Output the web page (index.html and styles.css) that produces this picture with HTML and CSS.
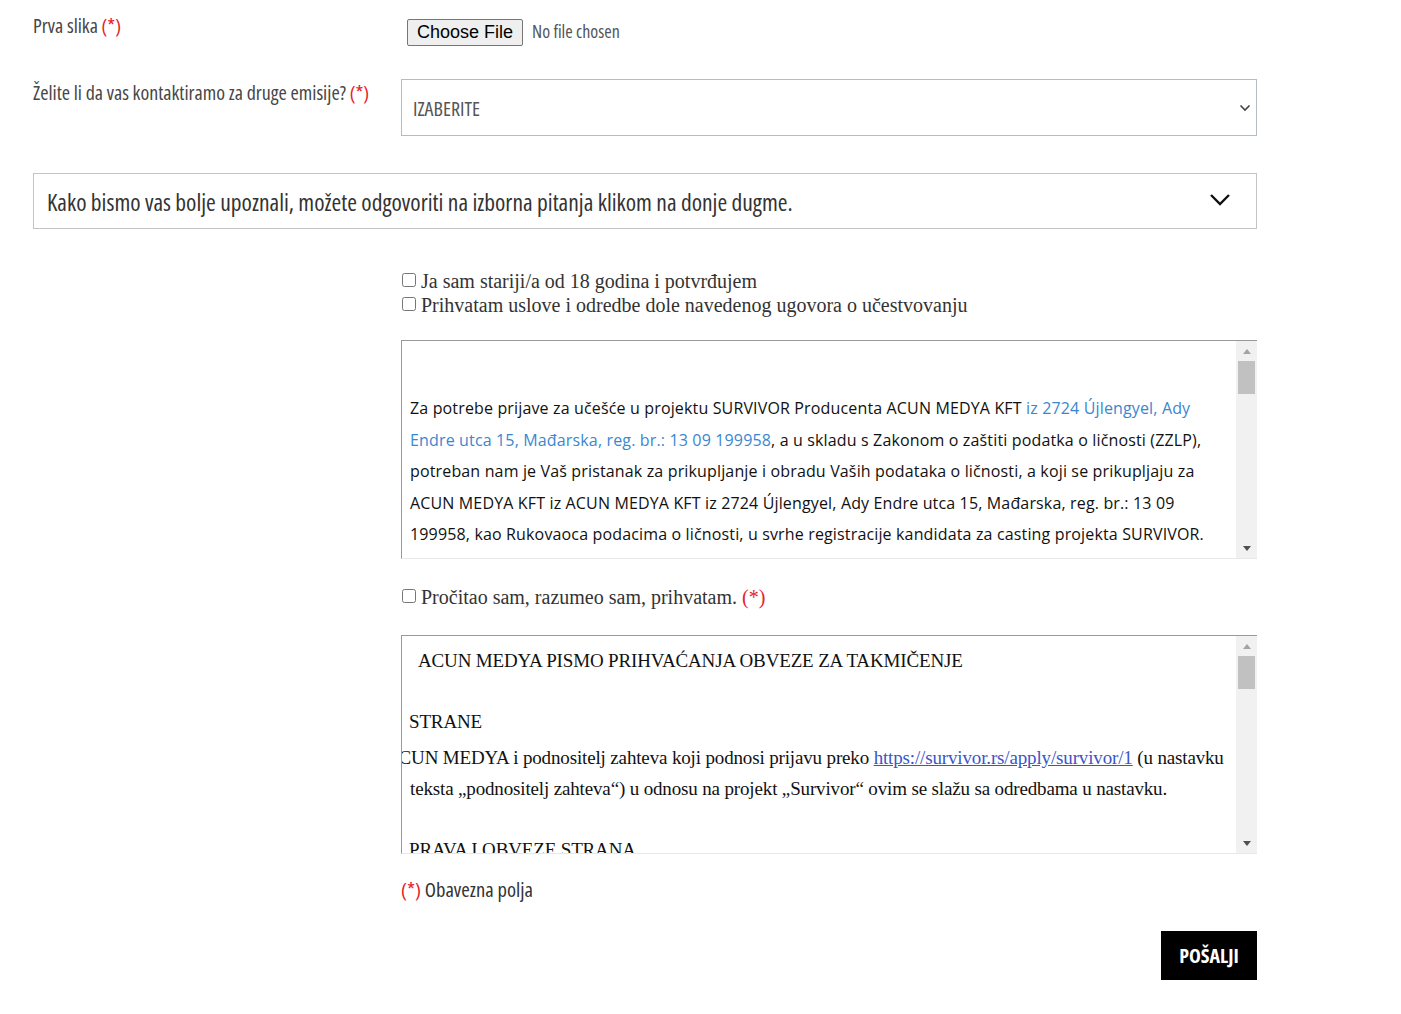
FILE: index.html
```html
<!DOCTYPE html>
<html lang="sr">
<head>
<meta charset="utf-8">
<title>Prijava</title>
<link rel="stylesheet" href="styles.css">
</head>
<body>
<form class="form">
  <div class="row row-file">
    <label class="lbl">Prva slika <span class="req">(*)</span></label>
    <div class="field"><input class="file" type="file"></div>
  </div>
  <div class="row row-select">
    <label class="lbl">Želite li da vas kontaktiramo za druge emisije? <span class="req">(*)</span></label>
    <div class="field">
      <div class="select">
        <span>IZABERITE</span>
        <svg class="sel-chev" width="12" height="8" viewBox="0 0 12 8"><path d="M1.5 1.5 L6 6 L10.5 1.5" fill="none" stroke="#444" stroke-width="1.6"/></svg>
      </div>
    </div>
  </div>
  <div class="accordion">
    <span>Kako bismo vas bolje upoznali, možete odgovoriti na izborna pitanja klikom na donje dugme.</span>
    <svg class="acc-chev" width="22" height="14" viewBox="0 0 22 14"><path d="M2 2 L11 11 L20 2" fill="none" stroke="#111" stroke-width="2.4"/></svg>
  </div>
  <div class="right">
    <div class="checks">
      <label class="chk"><input type="checkbox"> Ja sam stariji/a od 18 godina i potvrđujem</label>
      <label class="chk"><input type="checkbox"> Prihvatam uslove i odredbe dole navedenog ugovora o učestvovanju</label>
    </div>
    <div class="box box1">
      <div class="box-content">
        <p>Za potrebe prijave za učešće u projektu SURVIVOR Producenta ACUN MEDYA KFT <span class="blue">iz 2724 Újlengyel, Ady Endre utca 15, Mađarska, reg. br.: 13 09 199958</span>, a u skladu s Zakonom o zaštiti podatka o ličnosti (ZZLP), potreban nam je Vaš pristanak za prikupljanje i obradu Vaših podataka o ličnosti, a koji se prikupljaju za ACUN MEDYA KFT iz ACUN MEDYA KFT iz 2724 Újlengyel, Ady Endre utca 15, Mađarska, reg. br.: 13 09 199958, kao Rukovaoca podacima o ličnosti, u svrhe registracije kandidata za casting projekta SURVIVOR.</p>
        <p>Vaši podaci o ličnosti će se obrađivati isključivo u svrhu registracije i selekcije kandidata.</p>
      </div>
      <div class="sbar">
        <div class="sb-btn"><span class="tri-up"></span></div>
        <div class="sb-thumb"></div>
        <div class="sb-track"></div>
        <div class="sb-btn"><span class="tri-down"></span></div>
      </div>
    </div>
    <label class="chk chk3"><input type="checkbox"> Pročitao sam, razumeo sam, prihvatam. <span class="req">(*)</span></label>
    <div class="box box2">
      <div class="box-content">
        <p class="t-title">ACUN MEDYA PISMO PRIHVAĆANJA OBVEZE ZA TAKMIČENJE</p>
        <p class="t-head">STRANE</p>
        <p class="t-body"><span class="cut">ACUN MEDYA i podnositelj zahteva koji podnosi prijavu preko <a href="#">https://survivor.rs/apply/survivor/1</a> (u nastavku</span><br>teksta „podnositelj zahteva“) u odnosu na projekt „Survivor“ ovim se slažu sa odredbama u nastavku.</p>
        <p class="t-head t-head2">PRAVA I OBVEZE STRANA</p>
        <p class="t-body">Podnositelj zahteva se obavezuje da će sve informacije koje pruži biti tačne i potpune.</p>
      </div>
      <div class="sbar">
        <div class="sb-btn"><span class="tri-up"></span></div>
        <div class="sb-thumb"></div>
        <div class="sb-track"></div>
        <div class="sb-btn"><span class="tri-down"></span></div>
      </div>
    </div>
    <p class="note"><span class="req">(*)</span> Obavezna polja</p>
    <div class="actions"><button type="button" class="submit">POŠALJI</button></div>
  </div>
</form>
</body>
</html>
```
FILE: styles.css
```css
html, body {
  margin: 0;
  padding: 0;
  background: #fff;
}
.form {
  width: 1224px;
  margin-left: 33px;
  padding-top: 14px;
  font-family: "Open Sans", "DejaVu Sans Condensed", sans-serif;
  font-stretch: 75%;
  color: #444;
}
.row {
  display: grid;
  grid-template-columns: 368px 856px;
  align-items: start;
}
.lbl {
  font-size: 20px;
  line-height: 24px;
  color: #474747;
}
.req {
  color: #e8202a;
}
.row-file .lbl {
  padding-top: 0;
}
.row-file .field {
  padding-left: 6px;
  padding-top: 5px;
}
.file {
  font-family: "Open Sans", "DejaVu Sans Condensed", sans-serif;
  font-stretch: 75%;
  font-size: 18px;
  color: #555;
}
.file::file-selector-button {
  font-family: "Liberation Sans", Arial, sans-serif;
  font-stretch: 100%;
  font-size: 18px;
  color: #000;
  height: 27px;
  padding: 0 9px;
  margin-right: 9px;
  background: #efefef;
  border: 1px solid #767676;
  border-radius: 2px;
}
.row-select {
  margin-top: 33px;
}
.row-select .lbl {
  padding-top: 2px;
}
.select {
  box-sizing: border-box;
  height: 57px;
  border: 1px solid #b4bcc4;
  display: flex;
  align-items: center;
  justify-content: space-between;
  padding: 0 5px 0 11px;
  font-size: 20px;
  color: #555;
}
.select span {
  padding-top: 2px;
}
.accordion {
  box-sizing: border-box;
  margin-top: 37px;
  height: 56px;
  border: 1px solid #c4c4c4;
  display: flex;
  align-items: center;
  justify-content: space-between;
  padding: 0 25px 0 13px;
  font-size: 23.5px;
  color: #333;
}
.accordion span {
  padding-top: 2px;
}
.acc-chev {
  margin-top: -2px;
}
.right {
  margin-left: 368px;
  width: 856px;
}
.checks {
  margin-top: 40px;
  display: flex;
  flex-direction: column;
}
.chk {
  font-family: "Liberation Serif", "Times New Roman", serif;
  font-stretch: 100%;
  font-size: 20px;
  line-height: 24px;
  color: #333;
  display: flex;
  align-items: center;
  gap: 5px;
}
.chk input {
  margin: 0 0 2px 1px;
  width: 14px;
  height: 14px;
}
.box {
  box-sizing: border-box;
  height: 219px;
  border-top: 1px solid #999;
  border-left: 1px solid #999;
  border-bottom: 1px solid #e8e8e8;
  display: flex;
  overflow: hidden;
}
.box-content {
  flex: 1;
  overflow: hidden;
}
.sbar {
  width: 21px;
  flex: none;
  background: #f1f1f1;
  display: flex;
  flex-direction: column;
  align-items: center;
}
.sb-btn {
  height: 20px;
  width: 21px;
  display: flex;
  align-items: center;
  justify-content: center;
}
.tri-up {
  width: 0;
  height: 0;
  border-left: 4px solid transparent;
  border-right: 4px solid transparent;
  border-bottom: 5px solid #a3a3a3;
}
.tri-down {
  width: 0;
  height: 0;
  border-left: 4px solid transparent;
  border-right: 4px solid transparent;
  border-top: 5px solid #505050;
}
.sb-thumb {
  width: 17px;
  height: 33px;
  background: #c1c1c1;
}
.sb-track {
  flex: 1;
}
.box1 {
  margin-top: 23px;
}
.box1 .box-content {
  padding: 52px 18px 0 8px;
  font-family: "Open Sans", "Noto Sans", sans-serif;
  font-stretch: 100%;
  font-size: 16px;
  letter-spacing: 0.15px;
  line-height: 31.5px;
  color: #111;
}
.box1 p {
  margin: 0 0 16px;
}
.blue {
  color: #3a87d0;
}
.chk3 {
  margin-top: 26px;
}
.box2 {
  margin-top: 26px;
}
.box2 .box-content {
  padding: 11px 10px 0 7px;
  font-family: "Liberation Serif", "Times New Roman", serif;
  font-stretch: 100%;
  font-size: 19px;
  letter-spacing: -0.15px;
  color: #111;
}
.box2 p {
  margin: 0;
}
.t-title {
  padding-left: 9px;
  line-height: 28px;
}
.t-head {
  margin-top: 30px !important;
  margin-bottom: 3px !important;
  line-height: 34px;
}
.t-body {
  line-height: 31px;
  padding-left: 1px;
}
.cut {
  display: inline-block;
  margin-left: -25px;
  white-space: nowrap;
}
.t-body a {
  color: #3b55c8;
}
.t-head2 {
  margin-top: 29px !important;
}
.note {
  margin: 20px 0 0;
  font-size: 20.6px;
  line-height: 30px;
  color: #333;
}
.actions {
  display: flex;
  justify-content: flex-end;
  margin-top: 27px;
}
.submit {
  width: 96px;
  height: 49px;
  background: #000;
  color: #fff;
  border: none;
  border-radius: 0;
  font-family: "Open Sans", "DejaVu Sans Condensed", sans-serif;
  font-stretch: 75%;
  font-size: 20px;
  font-weight: bold;
  padding: 0;
}
```
